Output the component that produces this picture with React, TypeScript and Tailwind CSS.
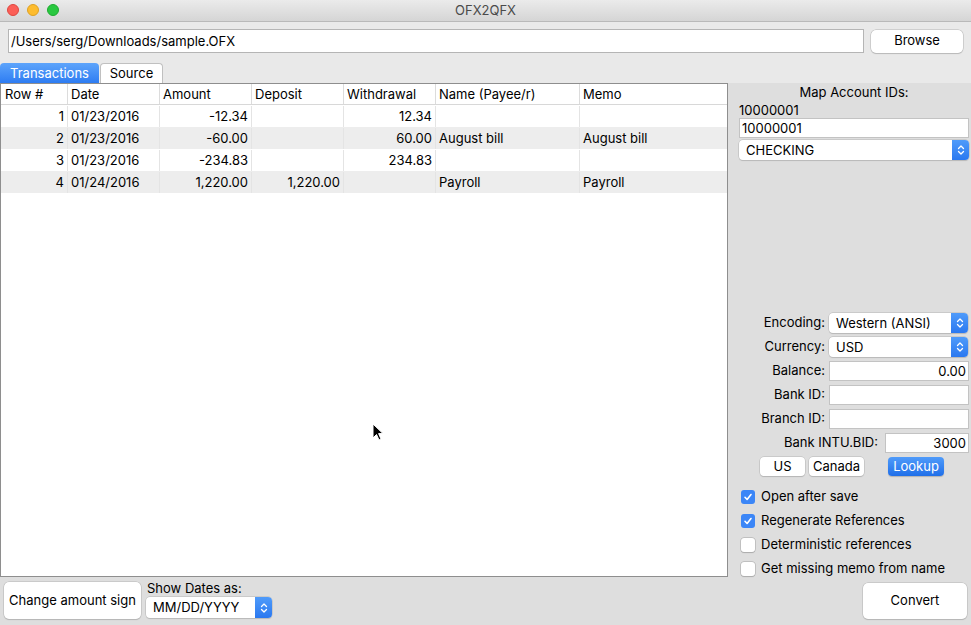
import React from 'react';

const FONT = { fontFamily: 'Inter, "Liberation Sans", Arial, sans-serif' };

const columns = [
  { title: 'Row #', width: 'w-[66px]', align: 'text-right' },
  { title: 'Date', width: 'w-[92px]', align: 'text-left' },
  { title: 'Amount', width: 'w-[92px]', align: 'text-right' },
  { title: 'Deposit', width: 'w-[92px]', align: 'text-right' },
  { title: 'Withdrawal', width: 'w-[92px]', align: 'text-right' },
  { title: 'Name (Payee/r)', width: 'w-[144px]', align: 'text-left' },
  { title: 'Memo', width: 'flex-1', align: 'text-left' },
];

const rows = [
  ['1', '01/23/2016', '-12.34', '', '12.34', '', ''],
  ['2', '01/23/2016', '-60.00', '', '60.00', 'August bill', 'August bill'],
  ['3', '01/23/2016', '-234.83', '', '234.83', '', ''],
  ['4', '01/24/2016', '1,220.00', '1,220.00', '', 'Payroll', 'Payroll'],
];

// blue up/down stepper of a popup button
function Stepper() {
  return (
    <div className="w-[17px] h-full rounded-r-[4px] bg-gradient-to-b from-[#4f9bfa] to-[#2a78f0] flex items-center justify-center">
      <svg width="8" height="12" viewBox="0 0 8 12" fill="none" stroke="white" strokeWidth="1.3" strokeLinecap="round" strokeLinejoin="round">
        <path d="M1.5 4.5 L4 2 L6.5 4.5" />
        <path d="M1.5 7.5 L4 10 L6.5 7.5" />
      </svg>
    </div>
  );
}

function Select({ value, className }: { value: string; className: string }) {
  return (
    <div className={`flex items-stretch bg-white rounded-[4px] shadow-[0_0_0_0.5px_#b5b5b5,0_1px_1px_rgba(0,0,0,0.15)] ${className}`}>
      <span className="flex-1 pl-[7px] leading-[20px] text-[13px] text-black">{value}</span>
      <Stepper />
    </div>
  );
}

function Field({ value = '', right = false, className = '' }: { value?: string; right?: boolean; className?: string }) {
  return (
    <div className={`h-[20px] bg-white border border-[#c3c3c3] text-[13px] leading-[18px] px-[2px] ${right ? 'text-right' : ''} ${className}`}>
      {value}
    </div>
  );
}

function Check({ checked, label }: { checked: boolean; label: string }) {
  return (
    <div className="flex items-center gap-[6px] h-[24px]">
      {checked ? (
        <div className="w-[14px] h-[14px] rounded-[3px] bg-[#3b86f7] flex items-center justify-center">
          <svg width="10" height="10" viewBox="0 0 10 10" fill="none" stroke="white" strokeWidth="1.6" strokeLinecap="round" strokeLinejoin="round">
            <path d="M2 5.3 L4.1 7.5 L8 2.5" />
          </svg>
        </div>
      ) : (
        <div className="w-[14px] h-[14px] rounded-[3px] bg-white shadow-[0_0_0_0.5px_#a8a8a8,0_0.5px_1px_rgba(0,0,0,0.2)]" />
      )}
      <span className="text-[13px] text-black">{label}</span>
    </div>
  );
}

function LabeledRow({ label, children }: { label: string; children: React.ReactNode }) {
  return (
    <div className="flex items-center h-[24px]">
      <span className="w-[90px] text-right pr-[4px] text-[13px] text-black">{label}</span>
      {children}
    </div>
  );
}

export default function App() {
  return (
    <div className="w-[971px] h-[625px] overflow-hidden flex flex-col bg-[#e9e9e9] relative" style={FONT}>
      {/* title bar */}
      <div className="h-[22px] relative flex items-center justify-center bg-gradient-to-b from-[#ebebeb] to-[#d5d5d5] border-b border-[#b9b9b9]">
        <div className="absolute left-[7px] top-[4px] flex gap-[8px]">
          <div className="w-[12px] h-[12px] rounded-full bg-[#fc5f57] border border-[#de4740]" />
          <div className="w-[12px] h-[12px] rounded-full bg-[#fdbc2e] border border-[#dea123]" />
          <div className="w-[12px] h-[12px] rounded-full bg-[#29c840] border border-[#1eab2f]" />
        </div>
        <span className="text-[13px] text-[#4a4a4a]">OFX2QFX</span>
      </div>

      {/* path row */}
      <div className="flex items-center px-[8px] pt-[7px] gap-[7px]">
        <div className="w-[857px] h-[24px] bg-white border border-[#b5b5b5] text-[13px] leading-[22px] px-[2px]">
          /Users/serg/Downloads/sample.OFX
        </div>
        <button className="w-[92px] h-[23px] bg-white rounded-[5px] shadow-[0_0_0_0.5px_#b5b5b5,0_1px_1px_rgba(0,0,0,0.18)] text-[13px] text-black">
          Browse
        </button>
      </div>

      {/* tabs */}
      <div className="flex items-end h-[30px] pt-[9px]">
        <div className="w-[99px] h-[20px] rounded-t-[4px] bg-gradient-to-b from-[#5da4fb] to-[#2d7cf2] text-white text-[13px] leading-[20px] text-center">
          Transactions
        </div>
        <div className="w-[63px] h-[20px] ml-[1px] rounded-t-[4px] bg-white border border-b-0 border-[#c0c0c0] text-black text-[13px] leading-[19px] text-center">
          Source
        </div>
      </div>

      {/* main area */}
      <div className="flex-1 flex bg-[#dedede]">
        <div className="w-[728px] shrink-0 flex flex-col">
          {/* table */}
          <div className="flex-1 bg-white border border-[#8e8e8e] flex flex-col text-[13px] text-black">
            <div className="flex h-[21px] border-b border-[#d8d8d8]">
              {columns.map((c, i) => (
                <div key={c.title} className={`${c.width} px-[3px] leading-[21px] ${i > 0 ? 'border-l border-[#dcdcdc]' : 'pl-[4px]'}`}>
                  {c.title}
                </div>
              ))}
            </div>
            {rows.map((r, ri) => (
              <div key={ri} className={`flex h-[22px] pt-[1px] ${ri % 2 === 1 ? 'bg-[#ededed]' : 'bg-white'}`}>
                {r.map((cell, ci) => (
                  <div
                    key={ci}
                    className={`${columns[ci].width} ${columns[ci].align} px-[3px] leading-[21px] ${ci > 0 ? 'border-l border-[#e4e4e4]' : ''}`}
                  >
                    {cell}
                  </div>
                ))}
              </div>
            ))}
          </div>

          {/* bottom controls */}
          <div className="h-[48px] flex items-start pt-[5px] pl-[4px] gap-[5px]">
            <button className="w-[137px] h-[37px] bg-white rounded-[5px] shadow-[0_0_0_0.5px_#b5b5b5,0_1px_1px_rgba(0,0,0,0.18)] text-[13px] text-black">
              Change amount sign
            </button>
            <div className="flex flex-col -mt-[1px]">
              <span className="text-[13px] text-black leading-[15px] pl-[1px]">Show Dates as:</span>
              <Select value="MM/DD/YYYY" className="w-[126px] h-[21px] mt-[1px]" />
            </div>
          </div>
        </div>

        {/* right panel */}
        <div className="flex-1 flex flex-col pl-[11px] pr-[3px] text-[13px] text-black">
          <div className="text-center pt-[1px] leading-[16px]">Map Account IDs:</div>
          <div className="leading-[16px] pt-[2px]">10000001</div>
          <Field value="10000001" />
          <Select value="CHECKING" className="h-[20px] mt-[2px]" />

          <div className="h-[151px]" />

          <LabeledRow label="Encoding:">
            <Select value="Western (ANSI)" className="w-[139px] h-[20px]" />
          </LabeledRow>
          <LabeledRow label="Currency:">
            <Select value="USD" className="w-[139px] h-[20px]" />
          </LabeledRow>
          <LabeledRow label="Balance:">
            <Field value="0.00" right className="w-[140px]" />
          </LabeledRow>
          <LabeledRow label="Bank ID:">
            <Field className="w-[140px]" />
          </LabeledRow>
          <LabeledRow label="Branch ID:">
            <Field className="w-[140px]" />
          </LabeledRow>
          <div className="flex items-center h-[24px] justify-end">
            <span className="pr-[7px]">Bank INTU.BID:</span>
            <Field value="3000" right className="w-[84px]" />
          </div>
          <div className="flex items-center h-[22px] pl-[21px] gap-[4px]">
            <button className="w-[45px] h-[19px] bg-white rounded-[4px] shadow-[0_0_0_0.5px_#b5b5b5,0_1px_1px_rgba(0,0,0,0.18)]">US</button>
            <button className="w-[55px] h-[19px] bg-white rounded-[4px] shadow-[0_0_0_0.5px_#b5b5b5,0_1px_1px_rgba(0,0,0,0.18)]">Canada</button>
            <button className="w-[56px] h-[19px] ml-[20px] rounded-[4px] text-white bg-gradient-to-b from-[#4f9bfa] to-[#1f6fe9] shadow-[0_1px_1px_rgba(0,0,0,0.2)]">Lookup</button>
          </div>

          <div className="flex flex-col pt-[8px] pl-[2px]">
            <Check checked label="Open after save" />
            <Check checked label="Regenerate References" />
            <Check checked={false} label="Deterministic references" />
            <Check checked={false} label="Get missing memo from name" />
          </div>

          <div className="flex justify-end pr-[2px] pt-[2px]">
            <button className="w-[104px] h-[36px] bg-white rounded-[5px] shadow-[0_0_0_0.5px_#b5b5b5,0_1px_1px_rgba(0,0,0,0.18)] text-[13px]">
              Convert
            </button>
          </div>
        </div>
      </div>

      {/* mouse pointer */}
      <svg className="absolute left-[372px] top-[423px]" width="12" height="18" viewBox="0 0 12 18">
        <path d="M1 1 L1 15 L4.5 11.5 L7 17 L9 16 L6.6 10.6 L11 10.6 Z" fill="black" stroke="white" strokeWidth="1" />
      </svg>
    </div>
  );
}
